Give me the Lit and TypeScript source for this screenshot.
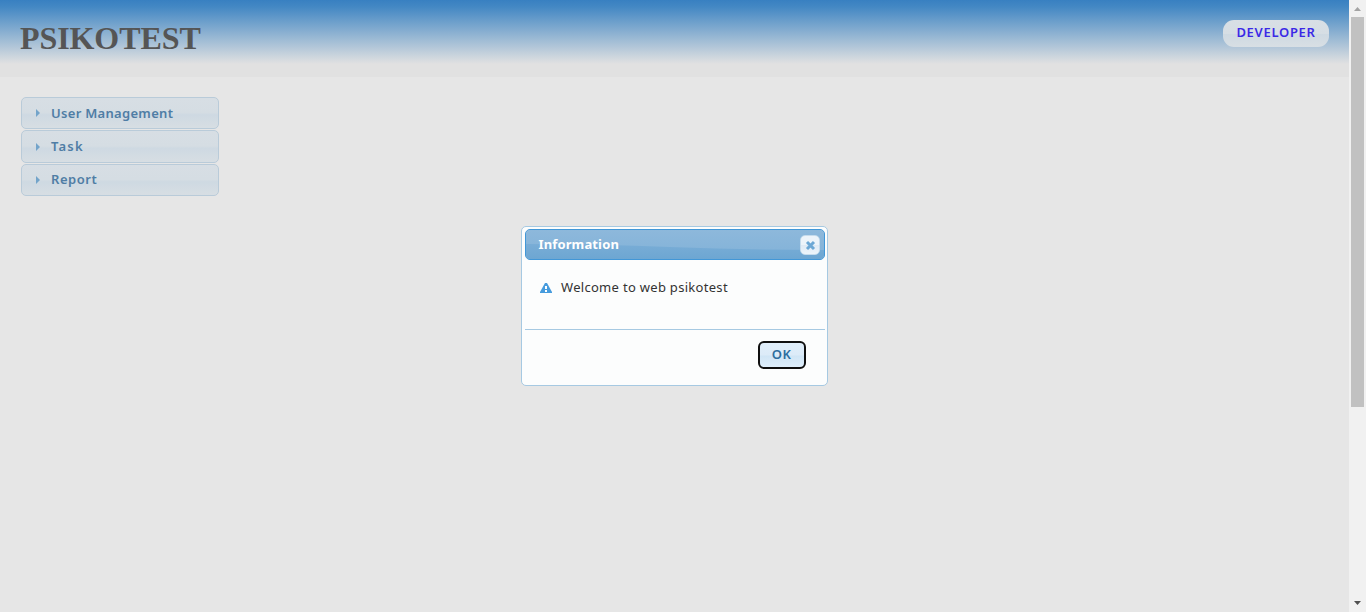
import { LitElement, html, css } from "lit";
import { customElement } from "lit/decorators.js";

@customElement("app-root")
export class AppRoot extends LitElement {
  static styles = css`
    :host { display: block; height: 612px; overflow: hidden; font-family: "Noto Sans", "Open Sans", sans-serif; font-size: 13px; }
    * { box-sizing: border-box; }
    .window { display: flex; height: 612px; position: relative; }
    .page { flex: 1; background: #e6e6e6; }
    header { height: 77px; padding: 20px 20px 0; display: flex; justify-content: space-between; align-items: flex-start; background: linear-gradient(#3880c1 0, #4488c4 7px, #e1e1e1 64px, #e1e1e1); }
    h1 { margin: 0; font: bold 32px/37px "Liberation Serif", serif; letter-spacing: -.08px; color: #555; }
    .user { width: 106px; height: 27px; border-radius: 11px; text-align: center; font-weight: 600; line-height: 24px; letter-spacing: .7px; color: #3b29e6; background: linear-gradient(#d8dfe5 0, #d6dee4 50%, #ced9e2 52%, #d8dfe4 100%); }
    nav { width: 198px; margin: 20px 0 0 21px; display: flex; flex-direction: column; gap: 1px; }
    .item { height: 32px; border: 1px solid #b9cbd9; border-radius: 5px; display: flex; align-items: center; padding-left: 14px; color: #4f7da5; font-weight: 600; letter-spacing: .3px; background: linear-gradient(#d7dee4 0, #d5dde3 48%, #ced9e2 56%, #d7dee3 100%); }
    .item:nth-child(2) { height: 33px; letter-spacing: 1.2px; }
    .item:nth-child(3) { letter-spacing: .55px; }
    .item:nth-child(n+2) span { padding-bottom: 2px; }
    .item svg { width: 4px; height: 8px; margin-right: 11px; fill: #73a4ca; }
    .scroll { width: 17px; background: #f1f1f1; display: flex; flex-direction: column; align-items: center; }
    .scroll svg { width: 17px; height: 17px; display: block; }
    .thumb { width: 13px; height: 390px; background: #c1c1c1; }
    .down { margin-top: auto; }
    .dialog { position: absolute; left: 521px; top: 226px; width: 307px; height: 160px; padding: 2px 2px 0 3px; background: #fcfdfd; border: 1px solid #a6c9e2; border-radius: 5px; }
    .title { position: relative; height: 31px; border: 1px solid #4297d7; border-radius: 5px; display: flex; align-items: center; justify-content: space-between; padding: 0 4px 0 12.5px; color: #fff; font-weight: 700; letter-spacing: .13px; overflow: hidden; background: #8bb6da; }
    .shine { position: absolute; inset: 0; width: 100%; height: 100%; }
    .title span, .close { position: relative; }
    .title span { padding-bottom: 2px; }
    .close { width: 20px; height: 20px; border: 1px solid #c5dbec; border-radius: 5px; background: linear-gradient(#edf4fa 50%, #dfeaf5 52%, #edf5fb); }
    .close svg { display: block; width: 18px; height: 18px; }
    .message { height: 69px; padding: 18px 0 0 15px; display: flex; align-items: flex-start; line-height: 18px; letter-spacing: .3px; color: #333; }
    .message svg { width: 12px; height: 12px; margin: 4px 9px 0 0; }
    .actions { height: 56px; border-top: 1px solid #a6c9e2; display: flex; justify-content: flex-end; padding: 11px 19px 0 0; }
    button { width: 48px; height: 28px; padding: 0 1px 2px 0; border: 2px solid #101010; border-radius: 6px; font: 600 13px/22px "Noto Sans", sans-serif; letter-spacing: .4px; color: #2e6e9e; background: linear-gradient(#e0eefa 0, #dcebf8 50%, #d0e5f5 54%, #dfeffc 100%); }
  `;

  render() {
    return html`
      <div class="window">
        <main class="page">
          <header><h1>PSIKOTEST</h1><div class="user">DEVELOPER</div></header>
          <nav>
            ${["User Management", "Task", "Report"].map((label) => html`
              <div class="item"><svg viewBox="0 0 4 8"><path d="M0 0L4 4L0 8Z"/></svg><span>${label}</span></div>`)}
          </nav>
        </main>
        <aside class="scroll">
          <svg viewBox="0 0 17 17"><path d="M5 11L8.5 7L12 11Z" fill="#a3a3a3"/></svg>
          <div class="thumb"></div>
          <svg class="down" viewBox="0 0 17 17"><path d="M5 6L8.5 10L12 6Z" fill="#505050"/></svg>
        </aside>
        <section class="dialog">
          <div class="title">
            <svg class="shine" viewBox="0 0 298 29" preserveAspectRatio="none">
              <defs>
                <linearGradient id="top" x2="0" y2="1"><stop stop-color="#8db8db"/><stop offset="1" stop-color="#82b2d8"/></linearGradient>
                <linearGradient id="low" x2="0" y2="1"><stop stop-color="#79add6"/><stop offset="1" stop-color="#6da6d2"/></linearGradient>
              </defs>
              <path d="M0 0H298V29H0Z" fill="url(#top)"/>
              <path d="M0 14Q75 14 144 17Q220 20 298 20V29H0Z" fill="url(#low)"/>
            </svg>
            <span>Information</span>
            <div class="close"><svg viewBox="0 0 18 18"><path d="M6 6L13 13M13 6L6 13" stroke="#6da8d5" stroke-width="3"/></svg></div>
          </div>
          <div class="message">
            <svg viewBox="0 0 12 12"><path d="M5 1H7L12 10V11H0V10Z" fill="#469bdd"/><path d="M5 4H7V7H5ZM5 8H7V10H5Z" fill="#fff"/></svg>
            <span>Welcome to web psikotest</span>
          </div>
          <div class="actions"><button>OK</button></div>
        </section>
      </div>`;
  }
}
